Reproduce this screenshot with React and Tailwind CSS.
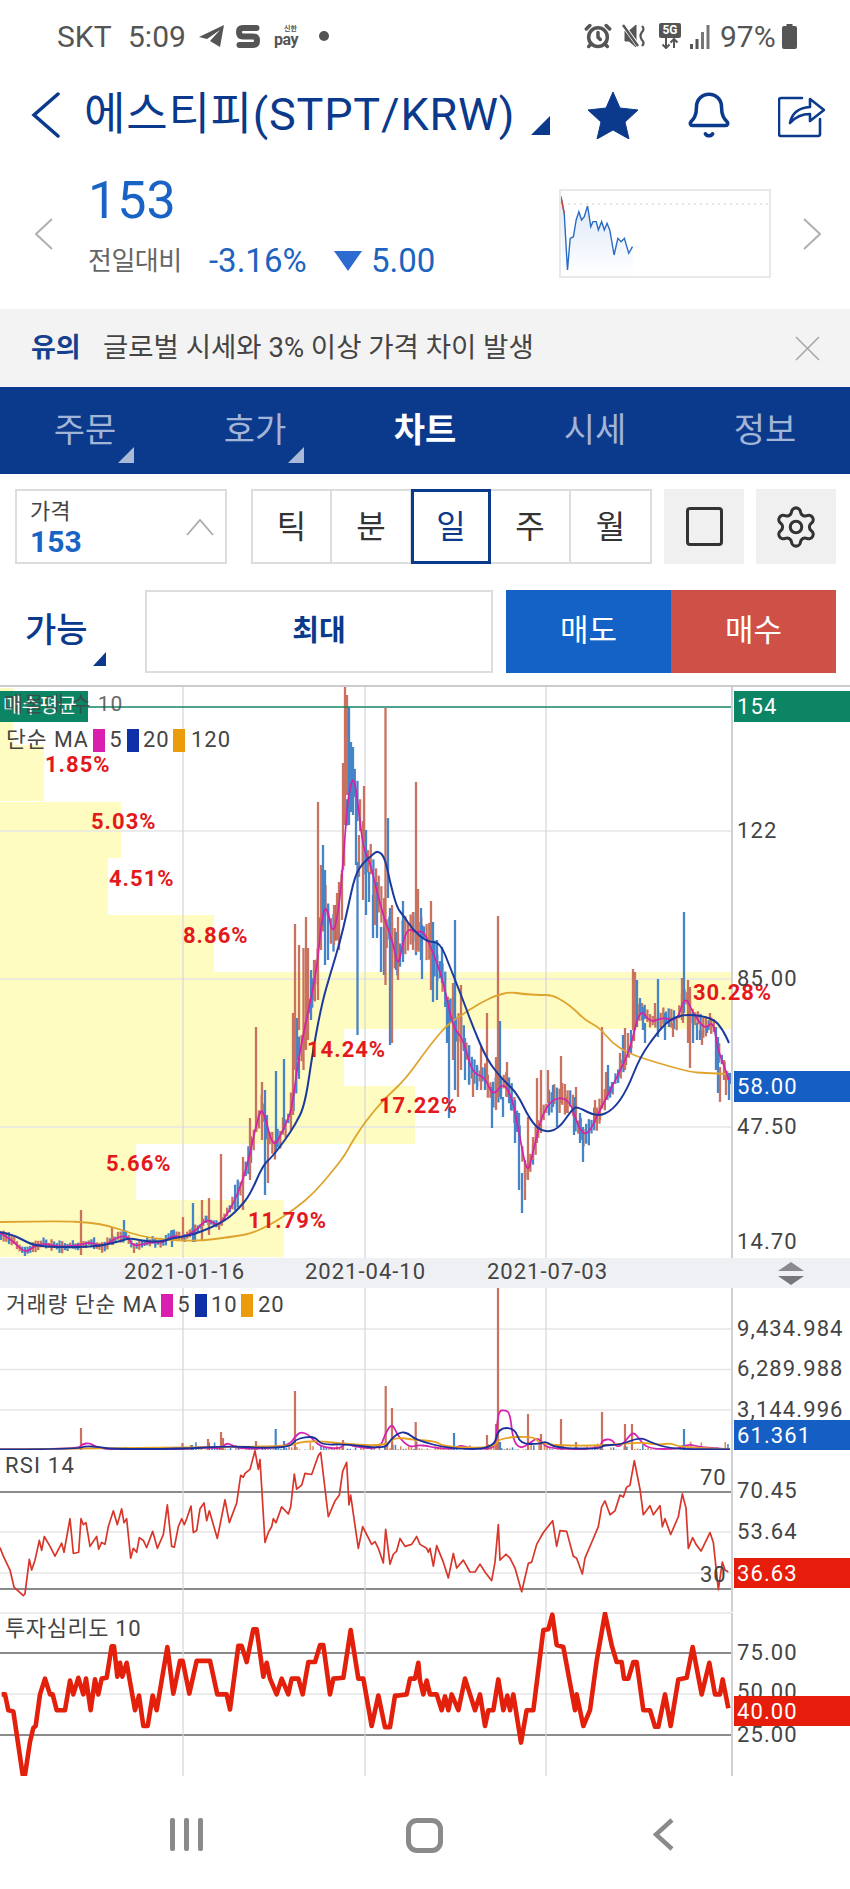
import { Bell, Settings, AlarmClock } from 'lucide-react'

const RED_BAR = '#c8725f'
const BLUE_BAR = '#4684c8'

// zoom traces are in crop pixels, these bring them back to page pixels
const rsiFrom = (pts, x0) => pts.map(([x, y]) => [x / 3 + x0, y / 2.533 + 1270])

const ma120 = [[0,1222],[60,1221],[90,1222.5],[110,1226],[130,1233],[150,1238],[170,1240],[200,1241],[230,1237],[250,1234],[270,1225],[295,1209],[315,1192],[335,1168],[345,1155],[352,1142],[365,1122],[385,1098],[405,1080],[430,1045],[447,1025],[460,1016],[480,1003],[497,995],[511,992],[522,994],[540,995],[552,995],[565,1002],[575,1010],[585,1020],[600,1028],[612,1043],[628,1053],[645,1059],[665,1065],[690,1072],[705,1073],[728,1074]]
const ma20 = [[0,1232],[13,1235],[23,1240],[33,1245],[50,1247],[80,1247],[100,1246],[117,1242],[130,1238],[143,1241],[160,1242],[173,1238],[187,1236],[200,1232],[217,1225],[230,1217],[240,1207],[250,1195],[263,1165],[272,1157],[285,1140],[295,1125],[305,1105],[313,1050],[322,1003],[330,975],[340,942],[347,912],[355,875],[363,863],[370,857],[378,850],[385,858],[390,882],[397,908],[403,915],[413,930],[427,942],[440,942],[450,967],[463,1000],[473,1027],[487,1060],[503,1080],[517,1093],[530,1120],[542,1132],[558,1130],[573,1108],[578,1107],[597,1117],[613,1110],[627,1090],[640,1057],[657,1033],[670,1019],[687,1014],[713,1018],[723,1030],[729,1043]]
const ma5 = [[0,1233],[7,1237],[15,1243],[25,1253],[33,1247],[43,1243],[60,1247],[80,1245],[90,1242],[103,1247],[117,1237],[128,1236],[133,1247],[150,1242],[163,1243],[173,1235],[182,1238],[197,1230],[207,1218],[218,1227],[230,1210],[238,1193],[247,1167],[258,1117],[263,1107],[273,1150],[283,1130],[292,1110],[298,1060],[310,1003],[317,968],[322,915],[327,905],[333,938],[340,902],[345,835],[348,798],[353,775],[357,795],[363,848],[370,862],[377,892],[384,918],[393,942],[398,968],[403,942],[408,928],[417,933],[423,930],[433,952],[443,980],[453,1028],[463,1038],[472,1073],[485,1077],[493,1097],[503,1082],[512,1097],[518,1127],[527,1175],[532,1157],[542,1113],[555,1097],[570,1100],[578,1127],[587,1137],[600,1110],[617,1077],[630,1050],[640,1007],[650,1023],[663,1017],[677,1022],[685,995],[693,1013],[705,1030],[713,1020],[718,1050],[723,1063],[729,1080]]

const spikes = [
  [81,1210,1255,'r'],[124,1220,1240,'b'],[112,1227,1245,'r'],[183,1217,1240,'r'],[193,1203,1242,'b'],[202,1200,1240,'r'],[209,1198,1235,'r'],[221,1154,1225,'r'],[195,1230,1242,'b'],[172,1230,1247,'b'],
  [256,1027,1130,'r'],[276,1071,1150,'b'],[284,1059,1130,'b'],[265,1090,1195,'b'],[262,1082,1140,'r'],[250,1118,1180,'r'],[243,1157,1210,'r'],[268,1133,1183,'r'],[293,1013,1115,'r'],[297,1018,1060,'b'],
  [295,924,1070,'r'],[299,945,1030,'r'],[303.5,948,1070,'r'],[306,917,1050,'r'],[308,948,1040,'r'],[311,970,1020,'b'],[314,960,1000,'r'],[318,802,1000,'r'],[321,865,950,'r'],[323,845,925,'b'],[325,870,965,'b'],[328,908,960,'b'],[334,905,945,'r'],[337,893,940,'r'],[339,882,950,'r'],[342,870,920,'r'],[343,763,870,'r'],[345,687,825,'r'],[347,695,795,'r'],[349,707,825,'b'],[351,742,812,'b'],[353,747,815,'b'],[356,795,865,'b'],[359,835,877,'r'],[357.5,862,1035,'b'],[364,786,842,'r'],[363,821,900,'r'],[366,830,915,'b'],[369,872,902,'b'],[373,895,938,'b'],[377,882,938,'b'],[375,885,925,'r'],[381,927,972,'b'],[384,927,975,'b'],[385.5,708,985,'r'],[388,818,898,'b'],[390,908,1045,'b'],[392,905,1043,'r'],[396,932,970,'b'],[398,917,980,'r'],[403,901,962,'b'],[413,912,950,'r'],[416,782,952,'r'],[418,889,950,'r'],[421,908,960,'b'],[422,925,979,'b'],[431,901,990,'r'],
  [433,922,1002,'b'],[437,940,1000,'b'],[442,947,983,'b'],[447,1000,1043,'b'],[449,1000,1118,'b'],[453,983,1060,'r'],[455,920,1090,'b'],[458,1033,1097,'r'],[461,985,1070,'r'],[465,1038,1080,'b'],[469,1050,1083,'b'],[473,1073,1097,'r'],[477,1065,1090,'b'],[481,1047,1090,'r'],[485,1068,1090,'b'],[487,1013,1083,'r'],[492,1087,1128,'b'],[496,1057,1110,'r'],[498,916,1097,'r'],[500,1021,1097,'b'],[503,1097,1117,'b'],[507,1062,1097,'r'],[511,1097,1110,'b'],[515,1100,1143,'b'],[519,1113,1190,'b'],[522,1173,1213,'b'],[525,1163,1200,'r'],[528,1117,1180,'r'],[533,1137,1160,'r'],[537,1078,1143,'r'],[541,1070,1133,'r'],[548,1070,1103,'r'],[553,1085,1107,'b'],[557,1090,1127,'b'],[561,1056,1103,'r'],[567,1097,1113,'r'],[576,1087,1120,'r'],[575,1097,1127,'b'],[574,1103,1135,'b'],[580,1113,1143,'b'],[583,1127,1162,'b'],[595,1100,1123,'r'],[600,1105,1120,'r'],[602,1027,1100,'r'],[606,1072,1100,'r'],[608,1065,1093,'b'],[612,1082,1093,'b'],[620,1053,1077,'r'],[625,1028,1070,'r'],[623,1035,1063,'b'],[628,1033,1057,'r'],[631,1030,1053,'b'],[633,969,1030,'r'],[635,972,1030,'r'],[637,980,1027,'b'],[640,998,1013,'b'],[643,1007,1030,'b'],[645,1023,1043,'b'],[655,1003,1023,'r'],[658,979,1037,'b'],[665,1013,1040,'b'],[669,1017,1027,'b'],[673,1023,1037,'r'],[682,978,1020,'r'],[683,1010,1023,'r'],[684,912,1013,'b'],[688,980,1043,'r'],[690,987,1068,'r'],[693,1013,1043,'b'],[697,1023,1040,'b'],[700,1030,1040,'b'],[702,1030,1045,'r'],[707,1027,1033,'b'],[710,1013,1027,'r'],[716,1027,1070,'b'],[718,1037,1093,'b'],[720,1067,1102,'r'],[724,1060,1080,'r'],[726,1073,1095,'r'],[729,1073,1100,'b'],
]

const volSpikes = [
  [81,1428,'r'],[126,1447,'r'],[182.5,1443,'r'],[192,1445,'b'],[208,1439,'r'],[221,1432,'r'],[223,1438,'r'],[256,1441,'r'],[275.7,1429,'b'],[284,1441,'b'],[295,1391,'r'],[343,1440,'r'],
  [385.7,1386,'r'],[392,1408,'r'],[415.7,1422,'r'],[454,1433,'b'],[487,1435,'r'],[496,1424,'r'],[498,1288,'r'],[500,1442,'b'],[528,1414,'r'],[541,1434,'r'],[561,1419,'r'],[576,1442,'r'],[602,1412,'r'],[625,1424,'r'],[632,1424,'r'],[684,1429,'b'],
]
const volMa5 = [[0,1449.5],[78,1449],[82,1444],[90,1443],[96,1447],[110,1449.5],[180,1449],[210,1447],[221,1449],[226,1443],[232,1445],[240,1449],[275,1448],[290,1444],[295,1437],[300,1432],[308,1434],[314,1441],[322,1447],[340,1449],[345,1443],[355,1447],[380,1449],[385,1434],[392,1423],[397,1434],[404,1443],[411,1447],[418,1445],[428,1446],[436,1448],[455,1449],[460,1445],[470,1448],[490,1449],[496,1445],[498,1411],[505,1410],[510,1413],[513,1440],[520,1449],[530,1443],[537,1438],[541,1441],[548,1449],[600,1449],[602,1440],[612,1439],[617,1448],[625,1442],[633,1431],[640,1440],[648,1449],[680,1449],[688,1444],[700,1447],[730,1449.5]]
const volMa10 = [[0,1449.5],[78,1449],[85,1446],[100,1447],[110,1449],[180,1449],[230,1446],[260,1448],[290,1447],[295,1440],[305,1437],[315,1437],[322,1445],[345,1444],[385,1449],[390,1440],[400,1432],[408,1433],[416,1440],[450,1449],[494,1449],[498,1428],[515,1428],[520,1444],[540,1444],[546,1441],[555,1448],[600,1449],[603,1445],[620,1445],[640,1437],[650,1442],[670,1449],[730,1449.5]]
const volMa20 = [[0,1449.5],[230,1447],[290,1446],[300,1442],[320,1441],[345,1444],[385,1446],[395,1437],[415,1440],[435,1441],[445,1447],[495,1448],[498,1438],[535,1436],[540,1445],[600,1446],[640,1442],[660,1445],[670,1443],[680,1447],[730,1449.5]]

const rsi = [
  ...rsiFrom([[0,703],[10,725],[30,760],[42,803],[70,825],[75,820],[88,733],[95,760],[105,735],[118,685],[125,710],[133,675],[150,700],[165,725],[185,692],[192,715],[210,630],[220,718],[236,715],[243,630],[250,645],[258,640],[270,700],[290,675],[296,707],[305,690],[315,695],[325,650],[340,610],[352,645],[365,605],[372,640],[380,630],[392,730],[400,705],[410,715],[418,678],[430,685],[440,703],[458,662],[472,705],[490,670],[502,595],[515,700],[523,702],[535,650],[545,630],[553,645],[560,630],[573,598],[580,665],[590,660],[600,605],[612,590],[620,635],[628,610],[652,680],[675,582],[688,640],[710,590],[722,520],[730,525],[735,515],[750,505],[765,458],[775,505],[780,480],[795,690],[805,665],[815,650],[820,630],[828,640],[845,600],[865,618],[872,600],[883,517],[890,555],[905,545],[915,515],[935,518],[955,470],[962,462],[985,625],[1005,585],[1018,570],[1028,510],[1040,487],[1047,595],[1052,570],[1062,630],[1075,705],[1088,650],[1100,670],[1115,695],[1125,688],[1135,705],[1150,742],[1157,657],[1170,745],[1180,720],[1190,712],[1200,680],[1215,700],[1235,695],[1250,675]], 0),
  ...rsiFrom([[0,695],[20,705],[25,715],[30,705],[40,750],[50,698],[70,740],[85,780],[100,718],[110,755],[130,735],[150,765],[165,765],[180,745],[195,765],[215,787],[225,740],[235,645],[240,735],[258,720],[270,730],[285,755],[305,815],[325,743],[335,740],[350,695],[370,665],[398,635],[410,700],[420,660],[440,662],[460,725],[470,730],[487,770],[495,730],[520,680],[535,650],[545,600],[555,585],[570,620],[585,610],[600,570],[610,575],[620,550],[630,545],[643,483],[660,555],[670,620],[690,597],[700,620],[720,597],[727,650],[735,630],[752,670],[775,625],[787,567],[798,603],[805,705],[818,678],[828,695],[843,712],[870,665],[880,690],[895,810],[907,740],[915,760],[925,765]], 420),
]

const mood = [
  ...rsiFrom([[5,1075],[15,1075],[25,1115],[40,1118],[68,1278],[75,1278],[90,1195],[100,1160],[107,1155],[120,1075],[135,1035],[150,1075],[158,1075],[170,1115],[195,1115],[210,1040],[220,1075],[235,1033],[250,1075],[258,1035],[272,1115],[285,1037],[295,1075],[305,1035],[320,1033],[335,953],[342,953],[352,1030],[360,995],[367,1030],[380,995],[405,1115],[417,1078],[430,1155],[443,1155],[458,1078],[470,1115],[502,955],[520,1073],[540,990],[548,990],[568,1073],[590,990],[630,990],[652,1075],[680,1075],[690,1113],[715,952],[725,952],[740,993],[760,910],[770,910],[790,1030],[800,995],[810,1035],[830,1075],[845,1035],[865,1075],[875,1035],[895,1035],[908,1075],[925,993],[945,993],[960,950],[970,950],[990,1075],[1000,1035],[1030,1033],[1052,912],[1075,1035],[1090,1035],[1115,1155],[1135,1078],[1155,1158],[1170,1158],[1185,1078],[1195,1078],[1220,1075],[1230,1035],[1245,1035],[1255,995]], 0),
  ...rsiFrom([[0,1040],[10,1075],[20,1040],[30,1075],[50,1075],[65,1115],[75,1080],[85,1115],[95,1075],[115,1115],[135,1035],[150,1075],[165,1115],[180,1075],[195,1155],[205,1115],[220,1115],[235,1037],[250,1115],[262,1078],[270,1115],[280,1075],[303,1197],[320,1115],[340,1115],[370,912],[385,910],[397,873],[410,950],[430,955],[465,1115],[470,1075],[490,1155],[510,1115],[530,990],[555,870],[575,950],[590,993],[605,993],[612,1035],[625,1035],[640,993],[650,993],[670,1115],[690,1115],[705,1157],[715,1157],[735,1075],[752,1155],[775,1037],[800,1033],[818,955],[845,1075],[868,995],[885,1075],[900,1075],[908,1037],[925,1110]], 420),
]

const profile = [
  [688,57,13],[745,56,44],[802,56,121],[858,57,108],[915,57,214],[972,57,731],[1029,57,344],[1086,58,415],[1144,56,136],[1200,57,284],
]

const pctLabels = [
  ['1.85%', 45, 765], ['5.03%', 91, 822], ['4.51%', 109, 879], ['8.86%', 183, 936],
  ['30.28%', 693, 993], ['14.24%', 307, 1050], ['17.22%', 379, 1106], ['5.66%', 106, 1164], ['11.79%', 248, 1221],
]

const toPoints = pts => pts.map(([x, y]) => `${x},${y}`).join(' ')

// rounds the moving averages through the midpoints of the traced points
function smoothPath(pts) {
  let d = `M${pts[0][0]} ${pts[0][1]}`
  for (let i = 1; i < pts.length - 1; i++) {
    const mx = (pts[i][0] + pts[i + 1][0]) / 2
    const my = (pts[i][1] + pts[i + 1][1]) / 2
    d += ` Q${pts[i][0]} ${pts[i][1]} ${mx} ${my}`
  }
  const last = pts[pts.length - 1]
  return `${d} L${last[0]} ${last[1]}`
}

function rng(seed) {
  let s = seed
  return () => {
    s = (s * 16807) % 2147483647
    return s / 2147483647
  }
}

function interp(pts, x) {
  for (let i = 1; i < pts.length; i++) {
    if (x <= pts[i][0]) {
      const [x0, y0] = pts[i - 1]
      const [x1, y1] = pts[i]
      return y0 + ((y1 - y0) * (x - x0)) / (x1 - x0 || 1)
    }
  }
  return pts[pts.length - 1][1]
}

// short candles that fill the space between the traced long ones
function fillerBars() {
  const rand = rng(4242)
  const bars = []
  for (let x = 1; x < 730; x += 2.66) {
    const amp = x < 230 ? 5 : x < 290 ? 12 : x < 470 ? 18 : x < 600 ? 12 : 9
    const c = interp(ma5, x)
    const up = amp * (0.3 + rand())
    const down = amp * (0.3 + rand())
    bars.push([x, c - up, Math.min(c + down, 1256), rand() > 0.48 ? 'r' : 'b'])
  }
  return bars
}

function volumeBars() {
  const rand = rng(777)
  const bars = []
  for (let x = 180; x < 730; x += 2.66) {
    const h = rand() * rand() * 9
    bars.push([x, 1450 - h, rand() > 0.45 ? 'r' : 'b'])
  }
  return bars
}

function Grid({ lines, x2 = 731 }) {
  return lines.map(y => <line key={y} x1="0" x2={x2} y1={y} y2={y} stroke="#e6e6e6" strokeWidth="1.5" />)
}

function VerticalGrid({ y1, y2 }) {
  return [183, 365, 546].map(x => <line key={x} x1={x} x2={x} y1={y1} y2={y2} stroke="#d4d6da" strokeWidth="1.2" />)
}

function AxisLabel({ y, top, children }) {
  return (
    <span className="absolute left-[4px] text-[22px] leading-[28px] tracking-[1.1px] text-[#444]" style={{ top: y - top - 14 }}>
      {children}
    </span>
  )
}

function AxisBadge({ y1, y2, top, color, children }) {
  return (
    <div className="absolute left-[1px] right-0 flex items-center pl-[3px] text-[22px] tracking-[1.1px] text-white" style={{ top: y1 - top, height: y2 - y1, backgroundColor: color }}>
      {children}
    </div>
  )
}

function Swatch({ color }) {
  return <span className="inline-block w-[12px] h-[23px]" style={{ backgroundColor: color }} />
}

function MainPanel() {
  const top = 685
  const h = 573
  return (
    <div className="relative flex h-[573px] border-t-2 border-[#ccc] box-border">
      <div className="relative w-[733px] shrink-0 -mt-[2px]">
        <svg width="733" height={h} viewBox={`0 ${top} 733 ${h}`} className="block">
          {profile.map(([y, ph, w]) => <rect key={y} x="0" y={y} width={w} height={ph} fill="#fefcc0" />)}
          <Grid lines={[831, 979, 1127]} />
          <VerticalGrid y1={687} y2={1258} />
          <line x1="732" x2="732" y1="687" y2="1258" stroke="#cfd1d6" strokeWidth="2" />
          {fillerBars().map(([x, y1, y2, c], i) => (
            <line key={i} x1={x} x2={x} y1={y1} y2={y2} stroke={c === 'r' ? RED_BAR : BLUE_BAR} strokeWidth="2.3" />
          ))}
          {spikes.map(([x, y1, y2, c], i) => (
            <line key={i} x1={x} x2={x} y1={y1} y2={y2} stroke={c === 'r' ? RED_BAR : BLUE_BAR} strokeWidth="2.3" />
          ))}
          <path d={smoothPath(ma120)} fill="none" stroke="#dfa42f" strokeWidth="1.8" />
          <path d={smoothPath(ma5)} fill="none" stroke="#d422a8" strokeWidth="1.7" />
          <path d={smoothPath(ma20)} fill="none" stroke="#1b3a9c" strokeWidth="2" />
          <line x1="0" x2="731" y1="707" y2="707" stroke="#128567" strokeWidth="1.5" />
        </svg>

        {pctLabels.map(([text, x, y]) => (
          <span key={text} className="absolute whitespace-nowrap text-[22px] leading-[24px] font-bold tracking-[1px] text-[#e3191b]" style={{ left: x, top: y - top - 12 }}>
            {text}
          </span>
        ))}

        <div className="absolute left-0 top-[6px] w-[88px] h-[31px] bg-[#0c8564] text-white text-[20px] leading-[31px] pl-[3px] whitespace-nowrap">매수평균</div>
        <span className="absolute left-[4px] top-[5px] text-[21px] leading-[28px] tracking-[1px] text-[#444] whitespace-nowrap opacity-80">매물대 수 10</span>
        <div className="absolute left-[6px] top-[43px] flex items-center gap-[4px] text-[22px] leading-[24px] tracking-[1px] text-[#444]">
          <span className="w-[83px] whitespace-nowrap text-[21.5px]">단순 MA</span>
          <Swatch color="#d91eb0" />
          <span className="w-[14px] text-center">5</span>
          <Swatch color="#1030a8" />
          <span className="w-[26px] text-center">20</span>
          <Swatch color="#ea9c0c" />
          <span className="pl-[2px]">120</span>
        </div>
      </div>
      <div className="relative flex-1 -mt-[2px]">
        <AxisBadge y1={691} y2={722} top={top} color="#0c8564">154</AxisBadge>
        <AxisLabel y={831} top={top}>122</AxisLabel>
        <AxisLabel y={979} top={top}>85.00</AxisLabel>
        <AxisBadge y1={1071} y2={1102} top={top} color="#155fc4">58.00</AxisBadge>
        <AxisLabel y={1127} top={top}>47.50</AxisLabel>
        <AxisLabel y={1242} top={top}>14.70</AxisLabel>
      </div>
    </div>
  )
}

function DateBar() {
  return (
    <div className="relative h-[30px] bg-[#eef0f4] text-[22px] leading-[30px] tracking-[1px] text-[#444]">
      <span className="absolute left-[124px] -top-[1px]">2021-01-16</span>
      <span className="absolute left-[305px] -top-[1px]">2021-04-10</span>
      <span className="absolute left-[487px] -top-[1px]">2021-07-03</span>
      <svg className="absolute left-[778px] top-[4px]" width="26" height="24" viewBox="0 0 26 24">
        <polygon points="13,0 26,9 0,9" fill="#8a8a8e" />
        <polygon points="0,14 26,14 13,23" fill="#77777b" />
      </svg>
    </div>
  )
}

function VolumePanel() {
  const top = 1288
  const h = 162
  return (
    <div className="relative flex h-[162px]">
      <div className="relative w-[733px] shrink-0">
        <svg width="733" height={h} viewBox={`0 ${top} 733 ${h}`} className="block">
          <Grid lines={[1329, 1369.5, 1410]} />
          <VerticalGrid y1={1288} y2={1450} />
          <line x1="732" x2="732" y1="1288" y2="1450" stroke="#cfd1d6" strokeWidth="2" />
          {volumeBars().map(([x, y, c], i) => (
            <line key={i} x1={x} x2={x} y1={y} y2="1450" stroke={c === 'r' ? '#d98a5e' : BLUE_BAR} strokeWidth="1.6" />
          ))}
          {volSpikes.map(([x, y, c], i) => (
            <line key={i} x1={x} x2={x} y1={y} y2="1450" stroke={c === 'r' ? RED_BAR : BLUE_BAR} strokeWidth="2.2" />
          ))}
          <path d={smoothPath(volMa5)} fill="none" stroke="#d622b0" strokeWidth="1.8" />
          <path d={smoothPath(volMa20)} fill="none" stroke="#e6a020" strokeWidth="1.8" />
          <path d={smoothPath(volMa10)} fill="none" stroke="#1b2f9c" strokeWidth="1.8" />
        </svg>
        <div className="absolute left-[6px] top-[5px] flex items-center gap-[4px] text-[22px] leading-[24px] tracking-[1px] text-[#444]">
          <span className="w-[151px] whitespace-nowrap text-[21.5px]">거래량 단순 MA</span>
          <Swatch color="#d91eb0" />
          <span className="w-[14px] text-center">5</span>
          <Swatch color="#1030a8" />
          <span className="w-[26px] text-center">10</span>
          <Swatch color="#ea9c0c" />
          <span className="pl-[1px]">20</span>
        </div>
      </div>
      <div className="relative flex-1">
        <AxisLabel y={1329} top={top}>9,434.984</AxisLabel>
        <AxisLabel y={1369} top={top}>6,289.988</AxisLabel>
        <AxisLabel y={1410} top={top}>3,144.996</AxisLabel>
        <AxisBadge y1={1420} y2={1450} top={top} color="#155fc4">61.361</AxisBadge>
      </div>
    </div>
  )
}

function RsiPanel() {
  const top = 1450
  const h = 162
  return (
    <div className="relative flex h-[162px]">
      <div className="relative w-[733px] shrink-0">
        <svg width="733" height={h} viewBox={`0 ${top} 733 ${h}`} className="block">
          <Grid lines={[1532, 1573]} />
          <line x1="0" x2="731" y1="1492" y2="1492" stroke="#8b8b8b" strokeWidth="2" />
          <line x1="0" x2="731" y1="1589" y2="1589" stroke="#8b8b8b" strokeWidth="2" />
          <VerticalGrid y1={1450} y2={1612} />
          <line x1="732" x2="732" y1="1450" y2="1612" stroke="#cfd1d6" strokeWidth="2" />
          <polyline points={toPoints(rsi)} fill="none" stroke="#d8362a" strokeWidth="1.7" strokeLinejoin="round" />
        </svg>
        <span className="absolute left-[5px] top-[2px] text-[22px] leading-[28px] tracking-[1.2px] text-[#444]">RSI 14</span>
        <span className="absolute left-[700px] top-[14px] text-[22px] leading-[28px] tracking-[1px] text-[#444]">70</span>
        <span className="absolute left-[700px] top-[111px] text-[22px] leading-[28px] tracking-[1px] text-[#444]">30</span>
      </div>
      <div className="relative flex-1">
        <AxisLabel y={1491} top={top}>70.45</AxisLabel>
        <AxisLabel y={1532} top={top}>53.64</AxisLabel>
        <AxisBadge y1={1558} y2={1588} top={top} color="#e51d0a">36.63</AxisBadge>
      </div>
    </div>
  )
}

function MoodPanel() {
  const top = 1612
  const h = 164
  return (
    <div className="relative flex h-[164px]">
      <div className="relative w-[733px] shrink-0">
        <svg width="733" height={h} viewBox={`0 ${top} 733 ${h}`} className="block">
          <Grid lines={[1613, 1694]} />
          <line x1="0" x2="731" y1="1653" y2="1653" stroke="#8b8b8b" strokeWidth="2" />
          <line x1="0" x2="731" y1="1735" y2="1735" stroke="#8b8b8b" strokeWidth="2" />
          <VerticalGrid y1={1613} y2={1776} />
          <line x1="732" x2="732" y1="1613" y2="1776" stroke="#cfd1d6" strokeWidth="2" />
          <polyline points={toPoints(mood)} fill="none" stroke="#e3200c" strokeWidth="4.6" strokeLinejoin="round" />
        </svg>
        <span className="absolute left-[5px] top-[3px] text-[22px] leading-[28px] tracking-[0.6px] text-[#444] whitespace-nowrap">투자심리도 10</span>
      </div>
      <div className="relative flex-1">
        <AxisLabel y={1653} top={top}>75.00</AxisLabel>
        <AxisLabel y={1692} top={top}>50.00</AxisLabel>
        <AxisBadge y1={1696} y2={1726} top={top} color="#e51d0a">40.00</AxisBadge>
        <AxisLabel y={1735} top={top}>25.00</AxisLabel>
      </div>
    </div>
  )
}

function StatusBar() {
  return (
    <div className="h-[72px] flex items-center pl-[57px] text-[#555]">
      <span className="text-[30px] w-[71px]">SKT</span>
      <span className="text-[30px] w-[71px]">5:09</span>
      <svg width="25" height="22" viewBox="0 0 25 22" fill="#555">
        <path d="M25 0 L0 12 L8 14 L21 5 L11 16 L21 22 Z" />
      </svg>
      <svg className="ml-[12px]" width="24" height="25" viewBox="0 0 24 25" fill="none">
        <path d="M20.500 4 H7 Q3 4 3 8 Q3 12.500 7 12.500 H17 Q21 12.500 21 16.500 Q21 21 17 21 H3.500" stroke="#555" strokeWidth="6" strokeLinecap="round" />
      </svg>
      <div className="ml-[10px] w-[28px] flex flex-col items-end leading-none font-bold">
        <span className="text-[7px] leading-[8px] pr-[1px]">신한</span>
        <span className="text-[16px] leading-[14px] -tracking-[0.5px]">pay</span>
      </div>
      <span className="ml-[21px] w-[10px] h-[10px] rounded-full bg-[#555]" />
      <AlarmClock className="ml-[255px]" size={28} strokeWidth={3} />
      <svg className="ml-[10px]" width="25" height="26" viewBox="0 0 25 26" fill="none" stroke="#555">
        <path d="M3 8 H7 L14 2 V24 L7 18 H3 Z" fill="#555" strokeWidth="1" />
        <path d="M1 2 L17 24" stroke="#fff" strokeWidth="4" />
        <path d="M1 2 L16 23" strokeWidth="2.4" />
        <path d="M20 3 Q23 6 20 9 Q17 13 20 17 Q23 20 20 23" strokeWidth="2.2" />
      </svg>
      <div className="ml-[12px] w-[22px] h-[26px] flex flex-col items-center">
        <span className="w-[22px] h-[15px] rounded-[2px] bg-[#555] text-white text-[12px] leading-[15px] font-bold text-center">5G</span>
        <svg width="20" height="11" viewBox="0 0 20 11" stroke="#555" strokeWidth="2" fill="none">
          <path d="M6 0 V10 M2.5 6.5 L6 10 L9.500 6.500 M14 10 V1 M10.500 4.500 L14 1 L17.500 4.500" />
        </svg>
      </div>
      <svg className="ml-[9px]" width="20" height="25" viewBox="0 0 20 25" fill="#555">
        <rect x="0" y="20" width="3" height="5" />
        <rect x="5.500" y="15" width="3" height="10" />
        <rect x="11" y="8" width="3" height="17" opacity="0.8" />
        <rect x="16.500" y="1" width="3" height="24" opacity="0.8" />
      </svg>
      <span className="ml-[10px] text-[30px] w-[62px]">97%</span>
      <svg width="15" height="25" viewBox="0 0 15 25" fill="#555">
        <rect x="4.500" y="0" width="6" height="3" />
        <rect x="0" y="2" width="15" height="23" rx="2" />
      </svg>
    </div>
  )
}

function Header() {
  return (
    <div className="h-[86px] flex items-center pl-[31px] text-[#0b3a8c]">
      <svg width="29" height="46" viewBox="0 0 29 46" fill="none" stroke="#0b3a8c" strokeWidth="3.500" strokeLinecap="round">
        <polyline points="27,2 3,23 27,44" />
      </svg>
      <span className="ml-[24px] w-[447px] text-[45px] tracking-[0.8px] whitespace-nowrap">에스티피(STPT/KRW)</span>
      <svg width="19" height="19" viewBox="0 0 19 19" className="mt-[20px]">
        <polygon points="19,0 19,19 0,19" fill="#0b3a8c" />
      </svg>
      <svg className="ml-[38px]" width="50" height="47" viewBox="0 0 50 47">
        <path d="M25 0 L32 16 L50 18 L37 30 L41 47 L25 38 L9 47 L13 30 L0 18 L18 16 Z" fill="#0b3a8c" stroke="#0b3a8c" strokeWidth="1" strokeLinejoin="round" />
      </svg>
      <Bell className="ml-[46px]" size={50} strokeWidth={1.7} color="#0b3a8c" />
      <svg className="ml-[44px]" width="47" height="45" viewBox="0 0 47 45" fill="none" stroke="#0b3a8c" strokeWidth="2.600" strokeLinejoin="round" strokeLinecap="round">
        <path d="M24 5 H3 Q1 5 1 7 V41 Q1 43 3 43 H40 Q42 43 42 41 V26" />
        <path d="M12 30 Q15 15 32 14 V6 L46 17 L32 28 V21 Q20 21 12 30 Z" />
      </svg>
    </div>
  )
}

function MiniChart() {
  const line = [[1035,590],[1041,640],[1047,810],[1052,715],[1058,710],[1063,660],[1068,635],[1073,660],[1078,650],[1084,618],[1090,680],[1094,665],[1100,665],[1104,690],[1110,665],[1115,690],[1120,670],[1125,690],[1133,765],[1140,715],[1146,725],[1152,715],[1160,760],[1167,740]].map(([x, y]) => [x / 1.845, y / 3])
  const area = `${toPoints(line)} 633,276 562,276`
  return (
    <svg className="block w-[212px] h-[89px] border-2 border-[#e8e8e8] box-border" viewBox="561 191 208 85">
      <defs>
        <linearGradient id="mini" x1="0" x2="0" y1="0" y2="1">
          <stop offset="0" stopColor="#dbe7f7" />
          <stop offset="1" stopColor="#ffffff" />
        </linearGradient>
      </defs>
      <line x1="562" x2="769" y1="204" y2="204" stroke="#dddddd" strokeWidth="1.500" strokeDasharray="2 4" />
      <polygon points={area} fill="url(#mini)" />
      <polyline points={toPoints(line)} fill="none" stroke="#2a6cc4" strokeWidth="1.400" />
      <polyline points={toPoints(line.slice(0, 2))} fill="none" stroke="#d8453a" strokeWidth="1.400" />
    </svg>
  )
}

function PriceRow() {
  return (
    <div className="h-[151px] flex items-center">
      <svg className="ml-[35px]" width="18" height="32" viewBox="0 0 18 32" fill="none" stroke="#b0b0b0" strokeWidth="2">
        <polyline points="17,1 1,16 17,31" />
      </svg>
      <div className="ml-[35px] w-[471px] self-start pt-[14px]">
        <div className="h-[58px] text-[52px] leading-[58px] text-[#1863c4]">153</div>
        <div className="mt-[11px] h-[40px] flex items-center whitespace-nowrap">
          <span className="w-[121px] text-[26px] -tracking-[0.5px] text-[#666]">전일대비</span>
          <span className="w-[125px] text-[33px] text-[#1d64c0]">-3.16%</span>
          <svg width="28" height="20" viewBox="0 0 28 20">
            <polygon points="0,0 28,0 14,20" fill="#2e6bd0" />
          </svg>
          <span className="ml-[9px] text-[33px] text-[#1d64c0]">5.00</span>
        </div>
      </div>
      <MiniChart />
      <svg className="ml-[32px]" width="18" height="32" viewBox="0 0 18 32" fill="none" stroke="#b0b0b0" strokeWidth="2">
        <polyline points="1,1 17,16 1,31" />
      </svg>
    </div>
  )
}

function NoticeBar() {
  return (
    <div className="h-[78px] bg-[#f3f3f3] flex items-center pl-[31px] pr-[30px] whitespace-nowrap">
      <span className="w-[72px] text-[27px] font-bold text-[#14408f]">유의</span>
      <span className="flex-1 text-[27.5px] text-[#444]">글로벌 시세와 3% 이상 가격 차이 발생</span>
      <svg width="25" height="25" viewBox="0 0 25 25" stroke="#a8a8a8" strokeWidth="1.600">
        <path d="M1 1 L24 24 M24 1 L1 24" />
      </svg>
    </div>
  )
}

function TabCorner() {
  return (
    <svg className="absolute left-[118px] top-[60px]" width="16" height="16" viewBox="0 0 16 16">
      <polygon points="16,0 16,16 0,16" fill="#a9b9d8" />
    </svg>
  )
}

function TabBar() {
  const tabs = [
    { label: '주문', corner: true },
    { label: '호가', corner: true },
    { label: '차트', active: true },
    { label: '시세' },
    { label: '정보' },
  ]
  return (
    <div className="h-[87px] bg-[#0b3a8c] grid grid-cols-5">
      {tabs.map(({ label, corner, active }) => (
        <div key={label} className={`relative flex items-center justify-center text-[34px] ${active ? 'font-bold text-white' : 'text-[#a3b5d6]'}`}>
          {label}
          {corner && <TabCorner />}
        </div>
      ))}
    </div>
  )
}

function Controls() {
  return (
    <div className="px-[15px] pt-[15px] pb-[12px] pr-[14px]">
      <div className="flex h-[75px]">
        <div className="w-[212px] border-2 border-[#ddd] relative pl-[13px]">
          <div className="text-[22px] leading-[26px] pt-[8px] text-[#444]">가격</div>
          <div className="text-[30px] leading-[34px] font-bold text-[#1863c4]">153</div>
          <svg className="absolute left-[169px] top-[28px]" width="28" height="17" viewBox="0 0 28 17" fill="none" stroke="#aaa" strokeWidth="1.800">
            <polyline points="1,16 14,1 27,16" />
          </svg>
        </div>
        <div className="ml-[24px] w-[402px] grid grid-cols-5 border-2 border-[#ddd] text-[32px] text-[#333]">
          {['틱', '분', '일', '주', '월'].map(d => (
            d === '일'
              ? <div key={d} className="relative -my-[2px] -ml-[1px] flex items-center justify-center border-[3px] border-[#0b3a8c] text-[#0b3a8c]">{d}</div>
              : <div key={d} className="flex items-center justify-center border-r-2 border-[#ddd] last:border-r-0">{d}</div>
          ))}
        </div>
        <div className="ml-[12px] w-[80px] bg-[#f0f0f0] flex items-center justify-center">
          <span className="w-[37px] h-[39px] border-[3px] border-[#333] rounded-[4px]" />
        </div>
        <div className="ml-[12px] w-[80px] bg-[#f0f0f0] flex items-center justify-center">
          <Settings size={46} strokeWidth={1.6} color="#333" />
        </div>
      </div>
      <div className="flex h-[83px] mt-[26px]">
        <div className="relative w-[130px] flex items-center pl-[10px] pb-[2px] text-[34px] font-medium text-[#0b3a8c]">
          가능
          <svg className="absolute left-[78px] top-[62px]" width="13" height="14" viewBox="0 0 13 14">
            <polygon points="13,0 13,14 0,14" fill="#0b3a8c" />
          </svg>
        </div>
        <div className="w-[348px] border-2 border-[#ddd] flex items-center justify-center text-[29px] font-bold text-[#0b3a8c]">최대</div>
        <div className="ml-[13px] w-[165px] bg-[#1562c6] flex items-center justify-center text-[31px] text-white">매도</div>
        <div className="w-[165px] bg-[#cf5047] flex items-center justify-center text-[31px] text-white">매수</div>
      </div>
    </div>
  )
}

function NavBar() {
  return (
    <div className="h-[113px] flex items-start pt-[42px]">
      <div className="ml-[170px] flex gap-[9px]">
        <span className="w-[5px] h-[33px] rounded-[2px] bg-[#8a8a8a]" />
        <span className="w-[5px] h-[33px] rounded-[2px] bg-[#8a8a8a]" />
        <span className="w-[5px] h-[33px] rounded-[2px] bg-[#8a8a8a]" />
      </div>
      <span className="ml-[203px] w-[37px] h-[35px] border-[5px] border-[#8a8a8a] rounded-[11px]" />
      <svg className="ml-[210px]" width="21" height="33" viewBox="0 0 21 33" fill="none" stroke="#8a8a8a" strokeWidth="4.500">
        <polyline points="19,2 3,16.500 19,31" />
      </svg>
    </div>
  )
}

export default function App() {
  return (
    <div className="w-[850px] h-[1889px] overflow-hidden bg-white [font-family:Roboto,'Noto_Sans_CJK_KR',sans-serif]">
      <StatusBar />
      <Header />
      <PriceRow />
      <NoticeBar />
      <TabBar />
      <Controls />
      <MainPanel />
      <DateBar />
      <VolumePanel />
      <RsiPanel />
      <MoodPanel />
      <NavBar />
    </div>
  )
}
